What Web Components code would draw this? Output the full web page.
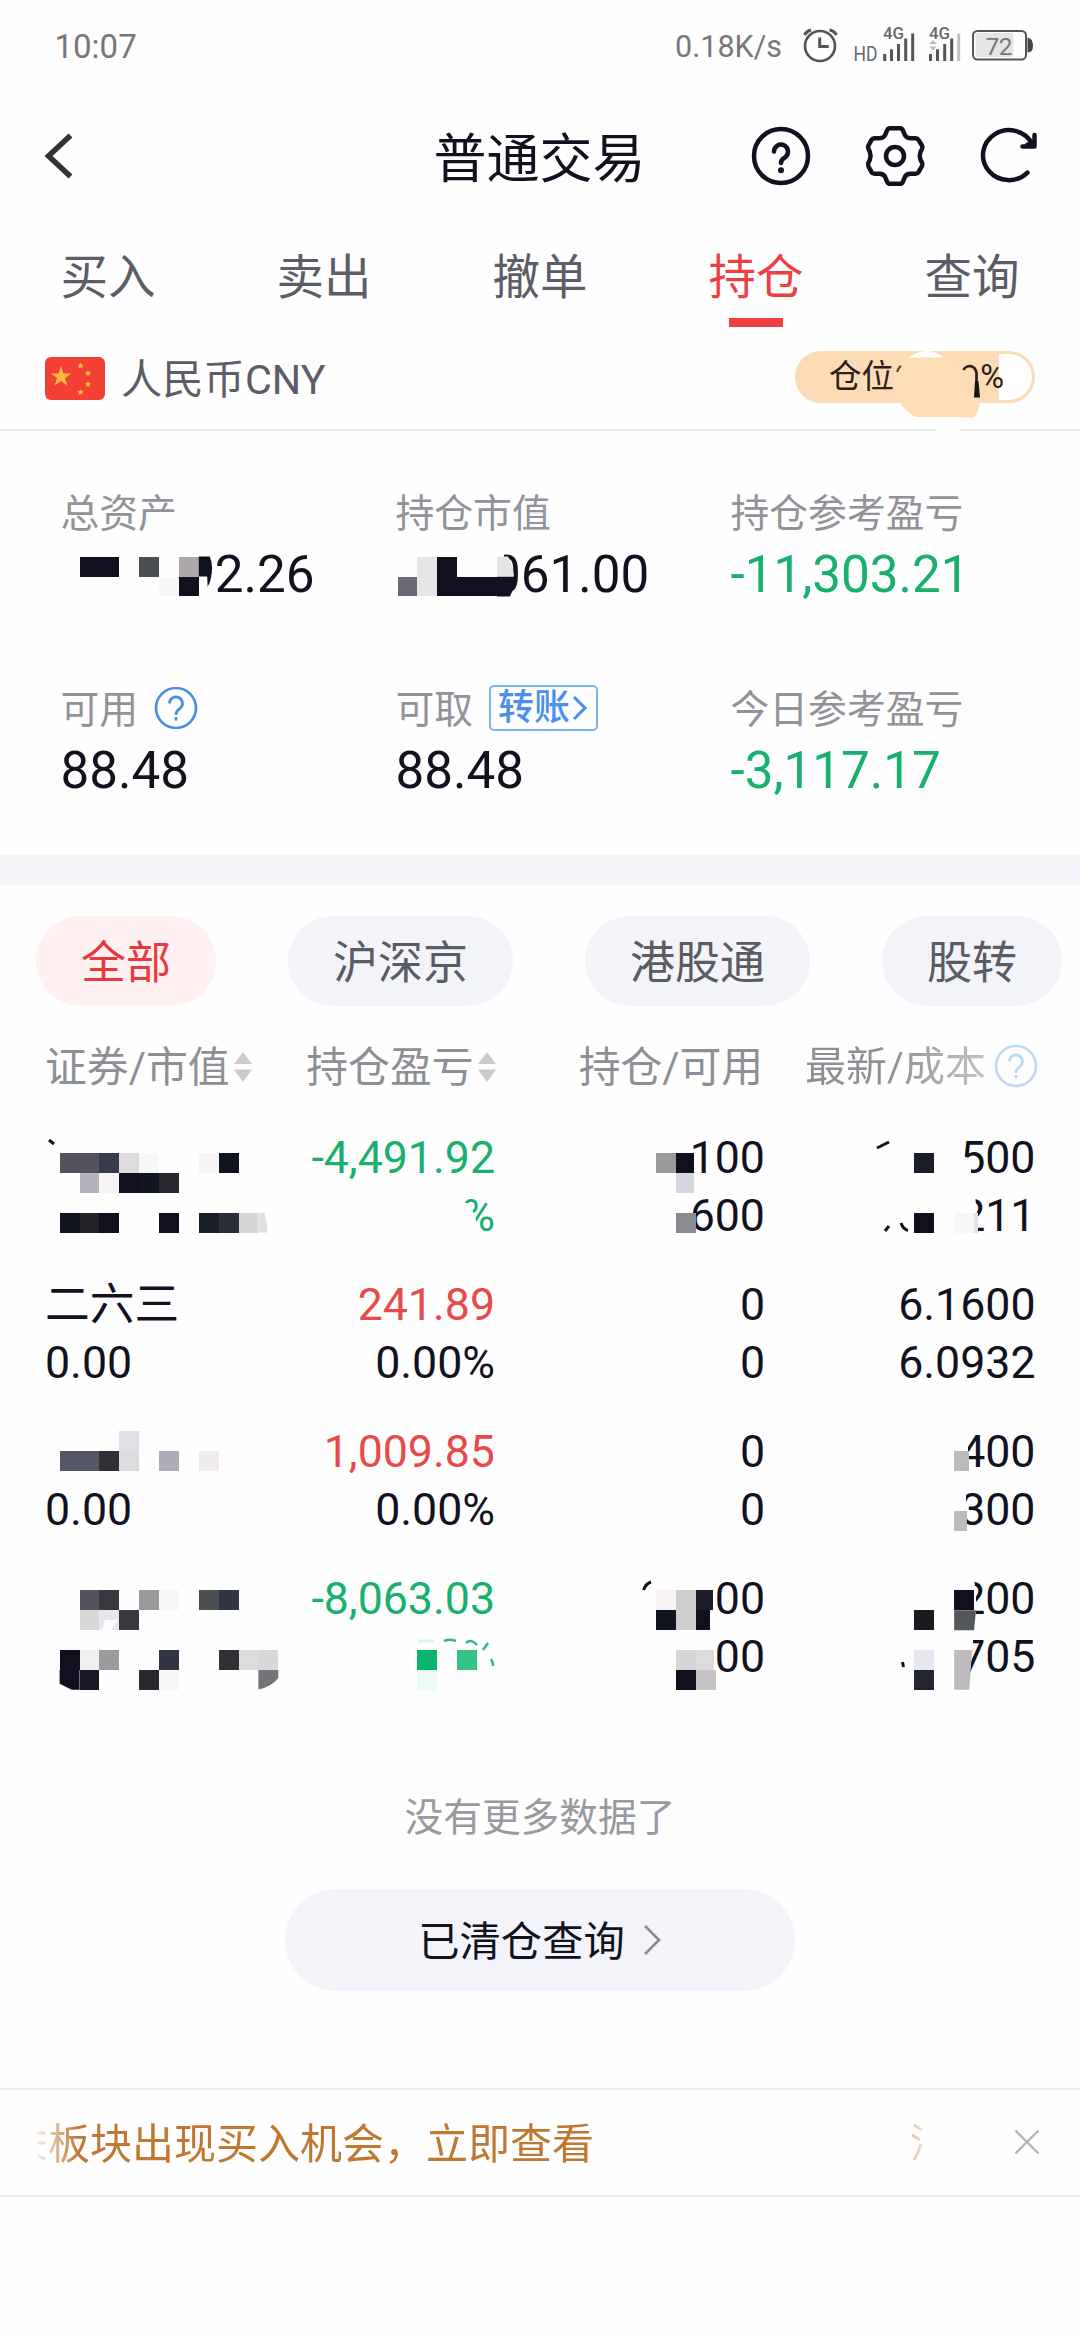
<!DOCTYPE html>
<html lang="zh-CN">
<head>
<meta charset="utf-8">
<title>普通交易</title>
<style>
	body {
		margin: 0;
		background: #fefefe;
	}
</style>
</head>
<body>
<trade-app></trade-app>

<script>
	const define = (name, html, setup) => {
		const template = document.createElement("template");
		template.innerHTML = html;

		customElements.define(
			name,
			class extends HTMLElement {
				constructor() {
					super();
					this.attachShadow({ mode: "open" });
				}

				connectedCallback() {
					if (this.shadowRoot.firstChild) return;
					this.shadowRoot.appendChild(template.content.cloneNode(true));
					if (setup) setup(this, this.shadowRoot);
				}
			}
		);
	};

	define("status-bar", `
		<style>
			:host {
				display: flex;
				align-items: center;
				justify-content: space-between;
				height: 92px;
				padding: 0 45px 0 54.500px;
				color: #77777a;
				font-size: 33px;
			}
			.right {
				display: flex;
				align-items: center;
				font-size: 30.500px;
			}
			svg { margin-left: 20px; }
		</style>
		<span>10:07</span>
		<div class="right">
			<span>0.18K/s</span>
			<svg width="233" height="92" viewBox="801 0 233 92" fill="none" stroke="#555557">
				<circle cx="819" cy="46" r="15" stroke-width="2.700"/>
				<path d="M818.700 37.500v9h9" stroke-width="3"/>
				<path d="M803.500 35q2-4 6.500-5M828.500 30q5 1 7 5" stroke-width="3"/>
				<g fill="#666668" stroke="none">
					<text x="852.500" y="60.700" font-size="20.600" textLength="24" lengthAdjust="spacingAndGlyphs">HD</text>
					<text x="882" y="39" font-size="16.500" font-weight="500" textLength="21" lengthAdjust="spacingAndGlyphs">4G</text>
					<text x="928" y="39" font-size="16.500" font-weight="500" textLength="21" lengthAdjust="spacingAndGlyphs">4G</text>
				</g>
				<path d="M883.700 61v-7M890.500 61v-11.700M897.500 61v-17M904.700 61v-22.500M911.700 61v-27.500M929.500 61v-7M936.500 61v-11.700M943.700 61v-17M950.700 61v-22.500" stroke-width="3"/>
				<path d="M957.700 61v-27.500" stroke="#c0c0c2" stroke-width="3"/>
				<path d="M928.500 44l3.500-4 3.500 4zM928.500 46.500l3.500 4 3.500-4z" fill="#bbb" stroke="none"/>
				<rect x="974.500" y="33" width="38" height="24" rx="2" fill="#e5e5e5" stroke="none"/>
				<rect x="972" y="31" width="53" height="28.500" rx="4.500" stroke-width="2"/>
				<path d="M1026.500 37.500q5.500 1 5.500 8t-5.500 7z" fill="#444" stroke="none"/>
				<text x="984.500" y="54.600" font-size="24.500" fill="#77777a" stroke="none" textLength="27">72</text>
			</svg>
		</div>
	`);

	define("nav-bar", `
		<style>
			:host {
				display: grid;
				grid-template-columns: 1fr auto 1fr;
				align-items: center;
				height: 130px;
				padding: 0 42px 0 41px;
				color: #12121f;
				font-size: 53px;
			}
			h1 {
				margin: 5px 0 0;
				font-size: inherit;
				font-weight: 400;
				line-height: 70px;
			}
			.tools {
				display: flex;
				gap: 50px;
				justify-content: flex-end;
				margin-top: -2px;
			}
			.refresh { margin-left: -3px; }
			svg {
				fill: none;
				stroke: #12121f;
				stroke-width: 4.500;
				stroke-linecap: round;
				stroke-linejoin: round;
			}
			.back {
				margin-top: -2px;
				stroke: #333337;
				stroke-width: 5.500;
				stroke-linecap: butt;
				stroke-linejoin: miter;
			}
		</style>
		<svg class="back" width="36" height="64" viewBox="41 124 36 64"><path d="M70.500 135.500L48.500 156l22 20.500"/></svg>
		<h1><slot></slot></h1>
		<div class="tools">
			<svg width="64" height="64" viewBox="748 124 64 64">
				<circle cx="780" cy="156" r="27"/>
				<path d="M773 151.500a7 7 0 1 1 11.500 5.500q-4.500 2.500-4.500 6"/>
				<circle cx="780" cy="170.300" r="3" fill="#12121f" stroke="none"/>
			</svg>
			<svg width="64" height="64" viewBox="862 124 64 64">
				<path d="M889 128.200h10q2 0 2.800 2l1.700 4q1.500 4 6 4h5q2 0 3 1.700l3.500 5.600q1 1.600 0 3.500l-1.500 2.800q-1.500 4 0 8l1.500 2.800q1 1.900 0 3.500l-3.500 6q-1 1.700-3 1.700h-5q-4.500 0-6 4l-1.700 4q-.8 2-2.800 2h-10q-2 0-2.800-2l-1.700-4q-1.500-4-6-4h-5q-2 0-3-1.700l-3-5.600q-1-2 0-3.900l1.300-2.800q1.500-4 0-8l-1.300-2.800q-1-1.900 0-3.500l3-5.600q1-1.700 3-1.700h5q4.500 0 6-4l1.700-4q.8-2 2.800-2z"/>
				<circle cx="894" cy="156" r="9"/>
			</svg>
			<svg class="refresh" width="64" height="64" viewBox="973 124 64 64">
				<path d="M1031 143.500A26 25 0 1 0 1026.500 172.700"/>
				<path d="M1033.500 135v11.500h-12M1026 145l6-3" stroke-width="4.500"/>
			</svg>
		</div>
	`);

	define("trade-tabs", `
		<style>
			:host {
				display: grid;
				grid-template-columns: repeat(5, 216px);
				height: 114px;
				font-size: 47.500px;
				color: #5c5d66;
			}
			::slotted(*) {
				display: flex;
				flex-direction: column;
				align-items: center;
				line-height: 64px;
				padding-top: 24px;
			}
			::slotted([active]) { color: #f03f42; }
			::slotted([active])::after {
				content: "";
				width: 54px;
				height: 9px;
				margin-top: 8px;
				background: #f03f42;
			}
		</style>
		<slot></slot>
	`);

	define("position-pill", `
		<style>
			:host {
				display: flex;
				align-items: center;
				gap: 68px;
				box-sizing: border-box;
				width: 240px;
				height: 52px;
				padding-left: 31px;
				border: 3px solid #fbdcb8;
				border-radius: 26px;
				background: linear-gradient(90deg, #fbdcb6 201px, #fff 201px);
				color: #2a211c;
				font-size: 32.500px;
				line-height: 50px;
			}
		</style>
		<span>仓位</span><span>0%</span>
	`);

	define("currency-row", `
		<style>
			:host {
				display: flex;
				align-items: center;
				box-sizing: border-box;
				height: 95px;
				padding: 0 45px;
				border-bottom: 2px solid #ececee;
				color: #5c5d66;
				font-size: 41.300px;
			}
			.name {
				flex: 1;
				margin: -6px 0 0 16px;
				line-height: 60px;
			}
			svg { margin-top: -9px; }
			position-pill { margin-top: -12px; }
		</style>
		<svg width="60" height="43" viewBox="0 0 60 43">
			<rect width="60" height="43" rx="6" fill="#f24034"/>
			<g fill="#fdb93b">
				<path d="M16 9l2.500 7.500h7.500l-6 4.700 2.300 7.300-6.300-4.500-6.300 4.500 2.300-7.300-6-4.700h7.500z"/>
				<path id="s" d="M35.500 5.500l1 2 2.200.2-1.600 1.500.4 2.300-2-1.200-2 1.200.4-2.300-1.600-1.500 2.200-.2z"/>
				<use href="#s" x="7.500" y="7.500"/><use href="#s" x="7.500" y="18.500"/><use href="#s" y="26.500"/>
			</g>
		</svg>
		<span class="name"><slot></slot></span>
		<position-pill></position-pill>
	`);

	define("help-icon", `
		<style>
			:host { display: inline-flex; color: #4a8fdf; }
		</style>
		<svg width="44" height="44" viewBox="0 0 44 44" fill="none" stroke="currentColor" stroke-width="2.700">
			<circle cx="22" cy="22" r="20"/>
			<path d="M15.500 17.500a6.500 6.500 0 1 1 10.500 5q-4 2.500-4 6.500"/>
			<path d="M22 31v3.500"/>
		</svg>
	`);

	define("transfer-button", `
		<style>
			:host {
				display: inline-flex;
				align-items: center;
				box-sizing: border-box;
				width: 109px;
				height: 46px;
				padding-left: 7px;
				border: 2px solid #7fb3f1;
				border-radius: 5px;
				color: #4a8fea;
				font-size: 36px;
				font-weight: 500;
				line-height: 44px;
			}
		</style>
		<slot></slot>
		<svg width="20" height="26" viewBox="0 0 20 26" fill="none" stroke="currentColor" stroke-width="3"><path d="M4 2l11 11L4 24"/></svg>
	`);

	define("account-figure", `
		<style>
			:host { display: block; }
			.label {
				display: flex;
				align-items: center;
				gap: 16px;
				height: 46px;
				color: #929298;
				font-size: 38.800px;
				line-height: 47px;
			}
			.label ::slotted(*) { margin-top: -3px; }
			.value {
				padding-left: var(--hidden, 0);
				margin-top: 7.500px;
				color: #12121f;
				font-size: 51.200px;
				line-height: 62px;
			}
			:host([down]) .value { color: #18b06c; }
		</style>
		<div class="label"><span></span><slot></slot></div>
		<div class="value"></div>
	`, (el, root) => {
		root.querySelector("span").textContent = el.getAttribute("label");
		root.querySelector(".value").textContent = el.getAttribute("value");
	});

	define("account-summary", `
		<style>
			:host {
				display: grid;
				grid-template-columns: 335px 335px 1fr;
				grid-auto-rows: 196.500px;
				box-sizing: border-box;
				height: 454px;
				padding: 59px 0 0 60.500px;
				border-bottom: 30px solid #f2f4f8;
			}
		</style>
		<account-figure label="总资产" value="92.26" style="--hidden:125.500px"></account-figure>
		<account-figure label="持仓市值" value="061.00" style="--hidden:96.500px"></account-figure>
		<account-figure label="持仓参考盈亏" value="-11,303.21" down></account-figure>
		<account-figure label="可用" value="88.48"><help-icon></help-icon></account-figure>
		<account-figure label="可取" value="88.48"><transfer-button>转账</transfer-button></account-figure>
		<account-figure label="今日参考盈亏" value="-3,117.17" down></account-figure>
	`);

	define("market-chips", `
		<style>
			:host {
				display: flex;
				gap: 72px;
				padding: 31px 0 0 36px;
			}
			::slotted(*) {
				flex: none;
				height: 90px;
				padding: 0 45px;
				border-radius: 45px;
				background: #f3f4f9;
				color: #5a5b63;
				font-size: 45px;
				line-height: 95px;
			}
			::slotted([active]) {
				background: #fff1f2;
				color: #e8393d;
			}
		</style>
		<slot></slot>
	`);

	define("sort-arrows", `
		<style>
			:host { display: inline-flex; margin-left: 4px; }
		</style>
		<svg width="18" height="30" viewBox="0 0 18 30" fill="#cbcbcd"><path d="M0 12L9 0l9 12zM0 17.500h18L9 30z"/></svg>
	`);

	define("holdings-head", `
		<style>
			:host {
				display: grid;
				grid-template-columns: 206.500px 244px 1fr auto;
				align-items: center;
				height: 122.600px;
				padding: 0 42px 0 45px;
				color: #8e8f95;
				font-size: 41.800px;
				line-height: 61px;
				white-space: nowrap;
			}
			div { display: flex; align-items: center; justify-content: flex-end; }
			.pos { margin-right: 42px; }
			.cost {
				background: linear-gradient(90deg, #8e8f95 45%, #c3c3c7);
				-webkit-background-clip: text;
				color: transparent;
				font-size: 41px;
			}
			help-icon { margin: -2px 0 0 8px; color: #bcd8f5; }
		</style>
		<div>证券/市值<sort-arrows></sort-arrows></div>
		<div>持仓盈亏<sort-arrows></sort-arrows></div>
		<div class="pos">持仓/可用</div>
		<div><span class="cost">最新/成本</span><help-icon></help-icon></div>
	`);

	// each attribute holds the two lines of a column, split by "|"
	define("holding-row", `
		<style>
			:host {
				display: grid;
				grid-template-columns: 205px 245px 270px 1fr;
				height: 147px;
				padding: 0 44.500px 0 45px;
				color: #12121f;
				font-size: 44.700px;
				line-height: 58px;
				text-align: right;
			}
			.name { text-align: left; }
			span { display: block; height: 58px; }
			:host([trend="up"]) .profit span:first-child { color: #e84a4b; }
			:host([trend="down"]) .profit span { color: #18b06c; }
		</style>
		<div class="name"></div>
		<div class="profit"></div>
		<div class="amount"></div>
		<div class="price"></div>
	`, (el, root) => {
		for (const key of ["name", "profit", "amount", "price"]) {
			const lines = (el.getAttribute(key) || "|").split("|");
			for (const line of lines) {
				const span = document.createElement("span");
				span.textContent = line;
				root.querySelector("." + key).appendChild(span);
			}
		}
	});

	define("holdings-foot", `
		<style>
			:host {
				display: flex;
				flex-direction: column;
				align-items: center;
				gap: 41px;
				box-sizing: border-box;
				height: 371.400px;
				padding-top: 71.400px;
				color: #999a9f;
				font-size: 38.700px;
			}
			p { margin: 0; line-height: 60px; }
			.cleared {
				display: flex;
				align-items: center;
				justify-content: center;
				gap: 18px;
				width: 510px;
				height: 102px;
				border-radius: 51px;
				background: #f3f4f9;
				color: #12121f;
				font-size: 41.300px;
			}
			.cleared span {
				padding-top: 4px;
				line-height: 60px;
			}
		</style>
		<p>没有更多数据了</p>
		<div class="cleared"><span><slot></slot></span>
			<svg width="19" height="32" viewBox="0 0 19 32" fill="none" stroke="#8c8c92" stroke-width="2.700"><path d="M2 2l14 14L2 30"/></svg>
		</div>
	`);

	define("notice-bar", `
		<style>
			:host {
				display: flex;
				align-items: center;
				box-sizing: border-box;
				height: 109px;
				padding: 0 40px 0 36px;
				border: solid #ededee;
				border-width: 2px 0;
				color: #bf7832;
				font-size: 42px;
				line-height: 60px;
			}
			.track {
				display: flex;
				align-items: center;
				width: 888px;
				white-space: nowrap;
				-webkit-mask-image: linear-gradient(90deg, rgba(0,0,0,.1), #000 42px, #000 calc(100% - 42px), rgba(0,0,0,.2));
			}
			.text { flex: 1; margin: 5px 0 0 2px; }
			.close { margin-left: auto; }
		</style>
		<div class="track">
			<svg width="10" height="40" viewBox="0 0 10 40" fill="none" stroke="currentColor" stroke-width="3"><path d="M1 11h8M1 21h8M2 34l7 3"/></svg>
			<span class="text"><slot></slot></span>
			<svg width="12" height="40" viewBox="0 0 12 40" fill="none" stroke="currentColor" stroke-width="3"><path d="M2 3l8 5M0 13l8 5M2 38q5-8 7-16"/></svg>
		</div>
		<svg class="close" width="26" height="26" viewBox="0 0 26 26" fill="none" stroke="#b4b4b8" stroke-width="2.400"><path d="M1.500 1.500l23 23M24.500 1.500l-23 23"/></svg>
	`);

	// pixelation blocks: [column, row, colour, width, height], in grid units
	const UNIT = 19.88;
	const CELLS = [
		[4, 28, "#10101f", 2], [7, 28, "#4b4f52"], [9, 28, "#aca8aa"], [8, 29, "#f7f7f7"], [9, 29, "#10101f"],
		[21, 28, "#e6e6e6", 1, 2], [22, 28, "#10101f", 1, 2], [20, 29, "#6b6976"], [23, 29, "#10101f", 2],
		[3, 58, "#54525a", 2], [5, 58, "#383c4a"], [6, 58, "#dddbdd"], [7, 58, "#f7f7f7"], [10, 58, "#f7f3f7"], [11, 58, "#10141f"],
		[4, 59, "#b5b2bf"], [5, 59, "#f7f3f7"], [6, 59, "#10101f"], [7, 59, "#10141f"], [8, 59, "#2a282f"],
		[3, 61, "#10141f"], [4, 61, "#242127"], [5, 61, "#10101f"], [8, 61, "#10101f"], [10, 61, "#1a1e28"], [11, 61, "#2b2e39"], [12, 61, "#d6d4d7"],
		[33, 58, "#9c9a9c"], [34, 58, "#10101f", .9], [34, 59, "#d6d7df", .9], [34, 61, "#8c8a8e"],
		[46, 58, "#1a1e28"], [46, 61, "#10101f"], [48, 61, "#f7f7f7"], [49, 61, "#e6dfe6", .2],
		[6, 72, "#dfdfe8"], [3, 73, "#535663", 2], [5, 73, "#322f37"], [6, 73, "#dddbdd"], [8, 73, "#adadb5"], [10, 73, "#efebef"],
		[48, 73, "#bcbabd", .75], [48, 76, "#bcbabd", .62],
		[4, 80, "#54525a"], [5, 80, "#3a3741"], [7, 80, "#9c9a9c"], [8, 80, "#f7f7f7"], [10, 80, "#4b4f52"], [11, 80, "#313442"],
		[4, 81, "#d8d8d8"], [5, 81, "#e6e7ef"], [6, 81, "#3a3741"],
		[3, 83, "#10101f"], [4, 83, "#efefef"], [5, 83, "#9c9a9c"], [8, 83, "#313442"], [11, 83, "#322f37"], [12, 83, "#dddbdd"], [13, 83, "#d8d8d8"],
		[4, 84, "#1a1828"], [7, 84, "#2a282f"], [8, 84, "#f7f7f7"],
		[21, 83, "#0ab46c"], [23, 83, "#35c285"], [21, 84, "#edfbf5"],
		[33, 80, "#f7f3f7"], [34, 80, "#cecece", 1, 2], [35, 80, "#1a1e28", .85], [33, 81, "#10141f"], [35, 81, "#10101f", .7],
		[34, 83, "#d6d4d7"], [35, 83, "#dddbdd", .93], [34, 84, "#10101f"], [35, 84, "#c6c4c7"],
		[48, 80, "#10101f"], [46, 81, "#1a1a1f"], [46, 83, "#e6e7ef"], [46, 84, "#232630"]
	];

	define("redact-layer", `
		<style>
			:host {
				position: absolute;
				inset: 0;
				pointer-events: none;
			}
		</style>
		<svg width="1080" height="2340" viewBox="0 0 1080 2340">
			<!-- wiped parts of digits -->
			<g fill="#fefefe">
				<path d="M182 550h24l2 45h-26zM486 550h17q4 20 2 45h-19z"/>
				<path d="M958 1157h8l5 8v12h-13zM955 1196h20q3 20 2 37h-22z"/>
				<path d="M955 1430h13v40h-13zM955 1490h11v40h-11zM955 1577h19l2 20v20h-21zM955 1635h18v20l-6 20h-12z"/>
				<path d="M458 1203h10q5 3 5 9l3 8v15h-18z"/>
			</g>
			<g class="cells" shape-rendering="crispEdges"></g>
			<g fill="#10101f">
				<path d="M198.800 556.600h11q4 10 1 20h-12zM497 576.500h18q-1 12-5 20h-13z"/>
				<path d="M497 556.600h11q5 10 6 20h-17z" fill="#e6e3e6"/>
				<path d="M59.600 1669.900h20v19.900h-8l-12-6z"/>
				<path d="M258.400 1669.900h19.900v8q-7 9-19.900 11.500z" fill="#74757a"/>
				<path d="M258.400 1212.700h6q3 10 3 19.900h-9z" fill="#dfdfdf"/>
				<path d="M954.200 1610.300h21.800l-2 19.900h-19.800z" fill="#53565a"/>
				<path d="M954.200 1650h18l-3 39.800h-15z" fill="#bcbabd"/>
				<path d="M105 1620h13l-7 10h-9z" fill="#fefefe"/>
			</g>
			<!-- strokes left at the edges -->
			<g fill="none" stroke="#12121f" stroke-width="3">
				<path d="M49 1140l5 4M877 1148l12-6M885 1231l4-5M901 1223q2 6 7 7.500M643.500 1590q2-6 7.500-8M902.500 1662l1 5"/>
				<path d="M418 1641h16" stroke="#dff5eb"/>
				<path d="M444 1641q6-2.500 12 0M466 1643q5-5 11 2M483 1650l5-7M491 1659q2 3 2 7" stroke="#32b87d" stroke-width="2.500"/>
			</g>
			<!-- smudge over the position pill -->
			<path d="M907 359q20-16 39 0z" fill="#fefefe"/>
			<path d="M907 357.600h40l22 13v30q0 9-6 16.500h-48q-22-14-21-38 2-15 13-21.500z" fill="#fddeb5"/>
			<path d="M958 360h21.500v34h-21.500z" fill="#fbdcb6"/>
			<path d="M963 394h17v6q0 10-6 17.600h-16z" fill="#fddeb5"/>
			<path d="M963.500 370q2-4 7-4 5 1 6 7v10" fill="none" stroke="#2a211c" stroke-width="2.700"/>
			<path d="M975 381h3.500l1.500 16.500h-6z" fill="#15131c"/>
			<path d="M897 372q2-5 4-6" fill="none" stroke="#5a4a3d" stroke-width="2"/>
			<path d="M936 428h24v2q-12 4-24 0z" fill="#fefefe"/>
		</svg>
	`, (el, root) => {
		const group = root.querySelector(".cells");
		for (const [x, y, color, w = 1, h = 1] of CELLS) {
			const rect = document.createElementNS("http://www.w3.org/2000/svg", "rect");
			rect.setAttribute("x", x * UNIT);
			rect.setAttribute("y", y * UNIT);
			rect.setAttribute("width", w * UNIT);
			rect.setAttribute("height", h * UNIT);
			rect.setAttribute("fill", color);
			group.appendChild(rect);
		}
	});

	define("trade-app", `
		<style>
			:host {
				display: block;
				position: relative;
				width: 1080px;
				height: 2340px;
				overflow: hidden;
				background: #fefefe;
				font-family: Roboto, "Noto Sans CJK SC", sans-serif;
			}
		</style>
		<status-bar></status-bar>
		<nav-bar>普通交易</nav-bar>
		<trade-tabs>
			<span>买入</span>
			<span>卖出</span>
			<span>撤单</span>
			<span active>持仓</span>
			<span>查询</span>
		</trade-tabs>
		<currency-row>人民币CNY</currency-row>
		<account-summary></account-summary>
		<market-chips>
			<span active>全部</span>
			<span>沪深京</span>
			<span>港股通</span>
			<span>股转</span>
		</market-chips>
		<holdings-head></holdings-head>
		<holding-row trend="down" profit="-4,491.92|%" amount="100|600" price="500|211"></holding-row>
		<holding-row trend="up" name="二六三|0.00" profit="241.89|0.00%" amount="0|0" price="6.1600|6.0932"></holding-row>
		<holding-row trend="up" name="|0.00" profit="1,009.85|0.00%" amount="0|0" price="400|300"></holding-row>
		<holding-row trend="down" profit="-8,063.03|" amount="00|00" price="200|705"></holding-row>
		<holdings-foot>已清仓查询</holdings-foot>
		<notice-bar>板块出现买入机会，立即查看</notice-bar>
		<redact-layer></redact-layer>
	`);
</script>
</body>
</html>
